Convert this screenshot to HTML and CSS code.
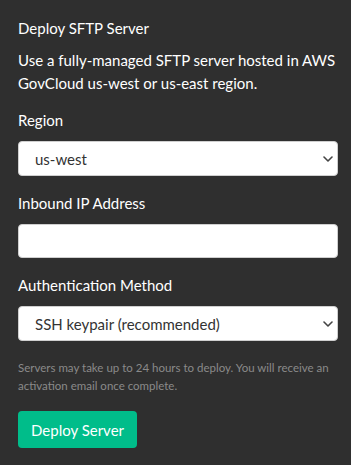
FILE: index.html
```html
<!DOCTYPE html>
<html>
<head>
<meta charset="utf-8">
<link rel="stylesheet" href="styles.css">
</head>
<body>
<form class="panel">
  <h1 class="title">Deploy SFTP Server</h1>
  <p class="intro">Use a fully-managed SFTP server hosted in AWS GovCloud us-west or us-east region.</p>

  <div class="field">
    <label class="label">Region</label>
    <div class="select-wrap">
      <select class="control select">
        <option>us-west</option>
        <option>us-east</option>
      </select>
      <svg class="chevron" width="10" height="6" viewBox="0 0 10 6"><path d="M1 1l4 4 4-4" fill="none" stroke="#444" stroke-width="1.6" stroke-linecap="round" stroke-linejoin="round"/></svg>
    </div>
  </div>

  <div class="field">
    <label class="label">Inbound IP Address</label>
    <input class="control" type="text">
  </div>

  <div class="field">
    <label class="label">Authentication Method</label>
    <div class="select-wrap">
      <select class="control select">
        <option>SSH keypair (recommended)</option>
        <option>Password</option>
      </select>
      <svg class="chevron" width="10" height="6" viewBox="0 0 10 6"><path d="M1 1l4 4 4-4" fill="none" stroke="#444" stroke-width="1.6" stroke-linecap="round" stroke-linejoin="round"/></svg>
    </div>
  </div>

  <p class="note">Servers may take up to 24 hours to deploy. You will receive an activation email once complete.</p>

  <button class="btn" type="button">Deploy Server</button>
</form>
</body>
</html>
```

FILE: styles.css
```css
html, body {
  margin: 0;
  padding: 0;
  background: #2f2f2f;
}
body {
  font-family: Lato, "Open Sans", sans-serif;
  color: #ffffff;
}
.panel {
  display: flex;
  flex-direction: column;
  padding: 18px 13px 0 18px;
  width: 320px;
}
.title {
  margin: 0;
  font-size: 15px;
  line-height: 20px;
  font-weight: 400;
}
.intro {
  margin: 11px 0 0;
  font-size: 15px;
  line-height: 23px;
}
.field {
  display: flex;
  flex-direction: column;
  margin-top: 17px;
}
.intro + .field {
  margin-top: 15px;
}
.label {
  font-size: 15px;
  line-height: 20px;
  margin-bottom: 11px;
}
.select-wrap {
  position: relative;
}
.control {
  box-sizing: border-box;
  width: 320px;
  height: 35px;
  margin: 0;
  border: 1px solid #cfcfcf;
  border-radius: 4px;
  background: #ffffff;
  font-family: Lato, "Open Sans", sans-serif;
  font-size: 15px;
  color: #333333;
  padding: 0 12px;
  outline: none;
}
input.control {
  height: 34px;
}
.select {
  appearance: none;
  -webkit-appearance: none;
  padding-left: 16px;
}
.chevron {
  position: absolute;
  right: 5px;
  top: 15px;
  pointer-events: none;
}
.note {
  margin: 18px 0 0;
  font-size: 11.5px;
  line-height: 18px;
  color: #8a8a8a;
}
.btn {
  align-self: flex-start;
  margin-top: 16px;
  height: 37px;
  padding: 0 13px;
  border: none;
  border-radius: 4px;
  background: #00bd8a;
  color: #ffffff;
  font-family: Lato, "Open Sans", sans-serif;
  font-size: 15px;
}
```
